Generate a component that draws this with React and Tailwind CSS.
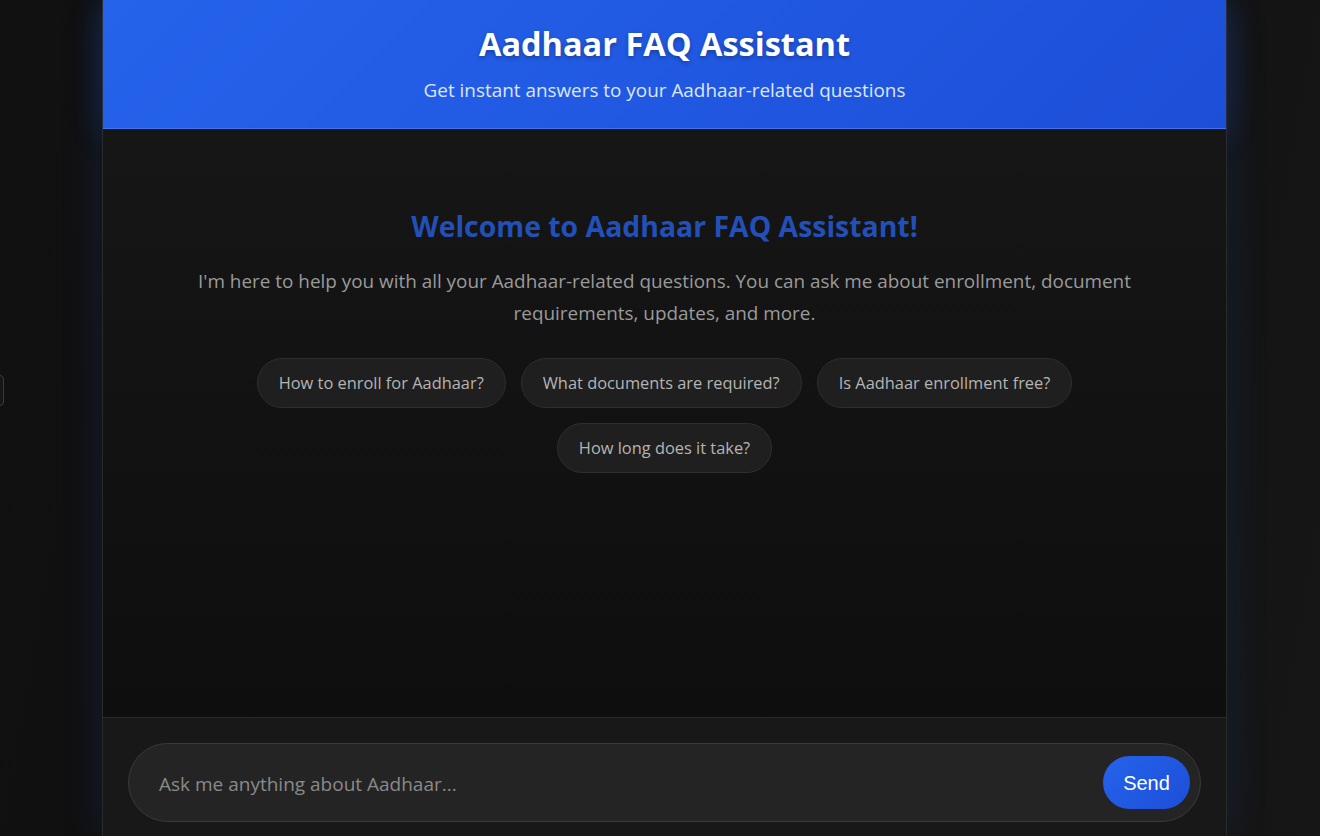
export default function App() {
  const chips = [
    "How to enroll for Aadhaar?",
    "What documents are required?",
    "Is Aadhaar enrollment free?",
    "How long does it take?",
  ];
  return (
    <div
      className="relative h-[836px] w-[1320px] overflow-hidden bg-[linear-gradient(100deg,#111111_0%,#0e0e0e_50%,#161616_100%)]"
      style={{ fontFamily: '"Open Sans", "Noto Sans", sans-serif' }}
    >
      <div className="absolute left-[-8px] top-[375px] h-[31px] w-[12px] rounded-[4px] border border-[#3a3a3a] bg-[#161616]" />
      <div className="ml-[102px] flex h-full w-[1125px] flex-col border-x border-[#2a2a2a] shadow-[0_0_40px_rgba(37,99,235,0.15)]">
        <header className="flex h-[129px] shrink-0 flex-col items-center border-b border-[#3b74f0] bg-[linear-gradient(135deg,#2563eb,#1d4ed8)] pt-[22px] shadow-[0_4px_30px_rgba(37,99,235,0.25)]">
          <h1 className="text-[32.5px] font-bold leading-[44px] text-white [text-shadow:0_2px_4px_rgba(0,0,0,0.3)]">
            Aadhaar FAQ Assistant
          </h1>
          <p className="mt-[11px] text-[18.9px] leading-[26px] text-[#dbe6ff]">
            Get instant answers to your Aadhaar-related questions
          </p>
        </header>
        <main className="flex flex-1 flex-col items-center bg-[linear-gradient(180deg,#161616,#0e0e0e)] pt-[77px]">
          <h2 className="text-[28.4px] font-bold leading-[40px] text-[#2250b8]">
            Welcome to Aadhaar FAQ Assistant!
          </h2>
          <p className="mt-[19px] max-w-[960px] text-center text-[18.9px] leading-[32px] text-[#9a9a9a]">
            I'm here to help you with all your Aadhaar-related questions. You can ask me about enrollment, document requirements, updates, and more.
          </p>
          <div className="mt-[29px] flex max-w-[860px] flex-wrap justify-center gap-[15px]">
            {chips.map((c) => (
              <button
                key={c}
                className="h-[50px] rounded-full border border-[#2e2e2e] bg-[#1f1f1f] px-[21px] pt-[1px] text-[16.4px] text-[#b4b4b4]"
              >
                {c}
              </button>
            ))}
          </div>
        </main>
        <footer className="h-[119px] shrink-0 border-t border-[#2a2a2a] bg-[#181818] px-[25px] pt-[25px]">
          <div className="flex h-[79px] items-center rounded-full border border-[#3a3a3a] bg-[#242424] pl-[30px] pr-[10px]">
            <span className="flex-1 pt-[3px] text-[19px] text-[#8a8a8a]">Ask me anything about Aadhaar...</span>
            <button
              className="h-[53px] w-[87px] rounded-full bg-[linear-gradient(135deg,#2563eb,#1d4ed8)] text-[20px] text-white"
              style={{ fontFamily: '"Liberation Sans", Arial, sans-serif' }}
            >
              Send
            </button>
          </div>
        </footer>
      </div>
    </div>
  );
}
